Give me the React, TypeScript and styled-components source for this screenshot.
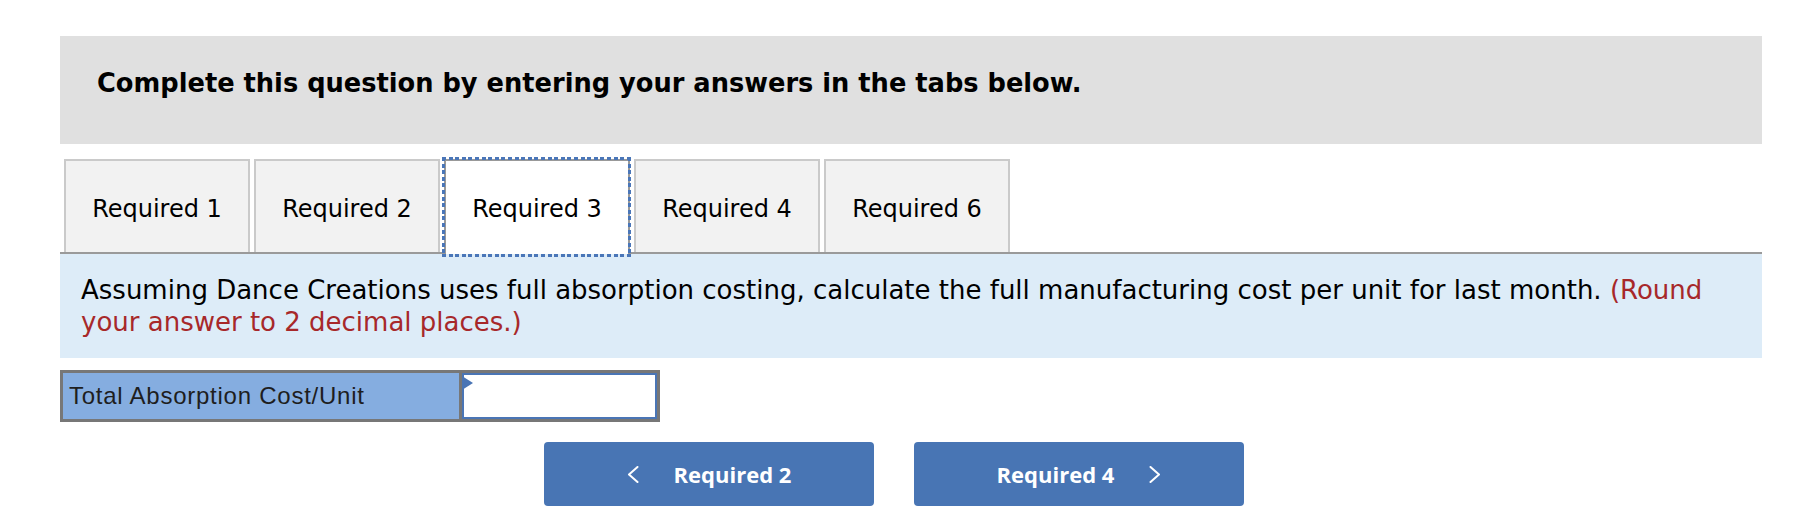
import React from "react";
import styled, { createGlobalStyle, css } from "styled-components";

const TABS = ["Required 1", "Required 2", "Required 3", "Required 4", "Required 6"];
const ACTIVE_TAB = "Required 3";
const FOCUS_BLUE = "#4a76b8";

const GlobalStyle = createGlobalStyle`
  body {
    margin: 0;
    background: #ffffff;
    font-family: "DejaVu Sans", Verdana, sans-serif;
    color: #000000;
  }
`;

interface TabProps {
  $active: boolean;
}

const Page = styled.div`
  padding: 36px 50px 0 60px;
  width: 1702px;
`;

const Banner = styled.div`
  background: #e0e0e0;
  box-sizing: border-box;
  font-size: 25.7px;
  font-weight: bold;
  height: 108px;
  line-height: 30px;
  padding: 32px 37px;
`;

const TabBar = styled.div`
  border-bottom: 2px solid #9a9a9a;
  display: flex;
  gap: 4px;
  height: 93px;
  margin-top: 15px;
  padding-left: 4px;
`;

// square dotted focus ring, drawn as gradients so the dots match the reference
const focusRing = css`
  &::after {
    background:
      repeating-linear-gradient(90deg, ${FOCUS_BLUE} 0 4px, transparent 4px 6.6px) top left / 100% 3px no-repeat,
      repeating-linear-gradient(90deg, ${FOCUS_BLUE} 0 4px, transparent 4px 6.6px) bottom left / 100% 3px no-repeat,
      repeating-linear-gradient(180deg, ${FOCUS_BLUE} 0 4px, transparent 4px 6.6px) top left / 3px 100% no-repeat,
      repeating-linear-gradient(180deg, ${FOCUS_BLUE} 0 4px, transparent 4px 6.6px) top right / 3px 100% no-repeat;
    bottom: -3px;
    content: "";
    left: -4px;
    pointer-events: none;
    position: absolute;
    right: -3px;
    top: -4px;
  }
`;

const Tab = styled.div<TabProps>`
  align-items: center;
  background: ${({ $active }) => ($active ? "#ffffff" : "#f2f2f2")};
  border: 2px solid ${({ $active }) => ($active ? "#999999" : "#cacaca")};
  border-bottom: none;
  box-sizing: border-box;
  display: flex;
  font-size: 24px;
  height: ${({ $active }) => ($active ? "95px" : "93px")};
  justify-content: center;
  padding-bottom: ${({ $active }) => ($active ? "2px" : "0")};
  padding-top: 5px;
  position: relative;
  width: 186px;
  z-index: ${({ $active }) => ($active ? 1 : 0)};
  ${({ $active }) => $active && focusRing}
`;

const Prompt = styled.div`
  background: #ddecf8;
  font-size: 26px;
  line-height: 32px;
  padding: 20px 21px;
`;

const Hint = styled.span`
  color: #a7282a;
`;

const AnswerRow = styled.div`
  border: 3px solid #777777;
  display: flex;
  height: 46px;
  margin-top: 12px;
  width: 594px;
`;

const AnswerLabel = styled.div`
  align-items: center;
  background: #85ade0;
  border-right: 3px solid #777777;
  color: #1e1e1e;
  display: flex;
  font-family: "Liberation Sans", Arial, sans-serif;
  font-size: 24px;
  letter-spacing: 0.75px;
  padding-left: 6px;
  width: 390px;
`;

const AnswerCell = styled.div`
  background: #ffffff;
  border: 2px solid #4a75b5;
  flex: 1;
  position: relative;
`;

const CellMarker = styled.div`
  border-bottom: 7px solid transparent;
  border-left: 11px solid #4a75b5;
  border-top: 7px solid transparent;
  height: 0;
  left: -2px;
  position: absolute;
  top: 1px;
  width: 0;
`;

const NavRow = styled.div`
  display: flex;
  gap: 40px;
  margin-top: 20px;
  padding-left: 484px;
`;

const NavButton = styled.button`
  align-items: center;
  background: #4875b4;
  border: none;
  border-radius: 4px;
  color: #ffffff;
  display: flex;
  font-family: "Open Sans", Roboto, sans-serif;
  font-size: 22px;
  font-weight: 700;
  gap: 35px;
  height: 64px;
  justify-content: center;
  padding: 0;
  width: 330px;
`;

const Chevron: React.FC<{ dir: "left" | "right" }> = ({ dir }) => (
  <svg width="12" height="17" viewBox="0 0 12 17" fill="none">
    <polyline
      points={dir === "left" ? "10.5,1 2,8.5 10.5,16" : "1.5,1 10,8.5 1.5,16"}
      stroke="#ffffff"
      strokeWidth="2"
      strokeLinecap="round"
      strokeLinejoin="round"
    />
  </svg>
);

export default function App() {
  return (
    <>
      <GlobalStyle />
      <Page>
        <Banner>Complete this question by entering your answers in the tabs below.</Banner>
        <TabBar>
          {TABS.map((tab) => (
            <Tab $active={tab === ACTIVE_TAB} key={tab}>
              {tab}
            </Tab>
          ))}
        </TabBar>
        <Prompt>
          Assuming Dance Creations uses full absorption costing, calculate the full manufacturing cost per unit for last month.{" "}
          <Hint>(Round your answer to 2 decimal places.)</Hint>
        </Prompt>
        <AnswerRow>
          <AnswerLabel>Total Absorption Cost/Unit</AnswerLabel>
          <AnswerCell>
            <CellMarker />
          </AnswerCell>
        </AnswerRow>
        <NavRow>
          <NavButton>
            <Chevron dir="left" />
            Required 2
          </NavButton>
          <NavButton>
            Required 4
            <Chevron dir="right" />
          </NavButton>
        </NavRow>
      </Page>
    </>
  );
}
